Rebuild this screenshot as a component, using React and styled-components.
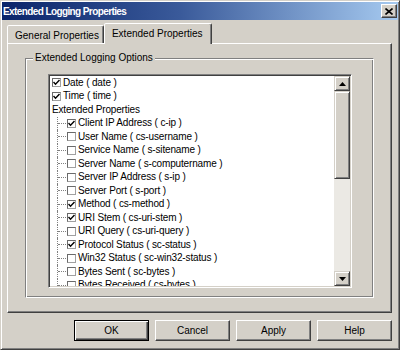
import React from "react";
import styled, { createGlobalStyle } from "styled-components";

const GlobalStyle = createGlobalStyle`
  html, body {
    margin: 0;
    padding: 0;
    background: #d4d0c8;
  }
  body {
    font-family: "Liberation Sans", Arial, sans-serif;
    font-size: 10px;
    color: #000;
  }
`;

const fields = [
  { label: "Date ( date )", checked: true, level: 0 },
  { label: "Time ( time )", checked: true, level: 0 },
  { label: "Extended Properties", header: true },
  { label: "Client IP Address ( c-ip )", checked: true, level: 1 },
  { label: "User Name ( cs-username )", level: 1 },
  { label: "Service Name ( s-sitename )", level: 1 },
  { label: "Server Name ( s-computername )", level: 1 },
  { label: "Server IP Address ( s-ip )", level: 1 },
  { label: "Server Port ( s-port )", level: 1 },
  { label: "Method ( cs-method )", checked: true, level: 1 },
  { label: "URI Stem ( cs-uri-stem )", checked: true, level: 1 },
  { label: "URI Query ( cs-uri-query )", level: 1 },
  { label: "Protocol Status ( sc-status )", checked: true, level: 1 },
  { label: "Win32 Status ( sc-win32-status )", level: 1 },
  { label: "Bytes Sent ( sc-bytes )", level: 1 },
  { label: "Bytes Received ( cs-bytes )", level: 1 },
];

const App = () => {
  return (
    <>
      <GlobalStyle />
      <Window>
        <TitleBar>
          <TitleText>Extended Logging Properties</TitleText>
          <CloseButton>
            <svg width="8" height="7" viewBox="0 0 8 7">
              <path d="M0.5 0.5 L7.5 6.5 M7.5 0.5 L0.5 6.5" stroke="#000" strokeWidth="1.6" />
            </svg>
          </CloseButton>
        </TitleBar>

        <Body>
          <TabRow>
            <Tab>General Properties</Tab>
            <Tab $active>Extended Properties</Tab>
          </TabRow>

          <Panel>
            <GroupBox>
              <Legend>Extended Logging Options</Legend>
              <GroupInner>
                <ListBox>
                  <Items>
                    {fields.map((f) => (
                      <Row key={f.label}>
                        {f.level === 1 && (
                          <Branch>
                            <BranchTick />
                          </Branch>
                        )}
                        {!f.header && (
                          <CheckBox>
                            {f.checked && (
                              <svg width="7" height="7" viewBox="0 0 7 7">
                                <path d="M0.5 3 L2.5 5.2 L6.5 1" stroke="#000" strokeWidth="1.4" fill="none" />
                              </svg>
                            )}
                          </CheckBox>
                        )}
                        <Label>{f.label}</Label>
                      </Row>
                    ))}
                  </Items>
                  <ScrollBar>
                    <ScrollButton>
                      <svg width="7" height="4" viewBox="0 0 7 4">
                        <path d="M3.5 0 L7 4 L0 4 Z" fill="#000" />
                      </svg>
                    </ScrollButton>
                    <Thumb />
                    <Track />
                    <ScrollButton>
                      <svg width="7" height="4" viewBox="0 0 7 4">
                        <path d="M0 0 L7 0 L3.5 4 Z" fill="#000" />
                      </svg>
                    </ScrollButton>
                  </ScrollBar>
                </ListBox>
              </GroupInner>
            </GroupBox>
          </Panel>

          <ButtonRow>
            <DialogButton $default>OK</DialogButton>
            <DialogButton>Cancel</DialogButton>
            <DialogButton>Apply</DialogButton>
            <DialogButton>Help</DialogButton>
          </ButtonRow>
        </Body>
      </Window>
    </>
  );
};

const Window = styled.div`
  width: 400px;
  height: 350px;
  box-sizing: border-box;
  background: #d4d0c8;
  border: 1px solid;
  border-color: #d4d0c8 #404040 #404040 #d4d0c8;
  box-shadow: inset 1px 1px 0 #fff, inset -1px -1px 0 #808080;
  padding: 1px;
  display: flex;
  flex-direction: column;
`;

const TitleBar = styled.div`
  height: 18px;
  flex: none;
  display: flex;
  align-items: center;
  padding: 0 1px 0 1px;
  background: linear-gradient(to right, #0a246a, #3a5a9a 45%, #a6caf0);
`;

const TitleText = styled.div`
  color: #fff;
  font-weight: bold;
  font-size: 10px;
  letter-spacing: -0.6px;
`;

const CloseButton = styled.div`
  margin-left: auto;
  width: 16px;
  height: 14px;
  box-sizing: border-box;
  background: #d4d0c8;
  border: 1px solid;
  border-color: #fff #404040 #404040 #fff;
  box-shadow: inset -1px -1px 0 #808080;
  display: flex;
  align-items: center;
  justify-content: center;
`;

const Body = styled.div`
  flex: 1;
  display: flex;
  flex-direction: column;
  padding: 3px 6px 0 5px;
`;

const TabRow = styled.div`
  height: 20px;
  display: flex;
  align-items: flex-end;
`;

const Tab = styled.div`
  position: relative;
  z-index: ${({ $active }) => ($active ? 1 : 0)};
  box-sizing: border-box;
  height: ${({ $active }) => ($active ? "21px" : "18px")};
  margin-bottom: ${({ $active }) => ($active ? "-1px" : "0")};
  padding: ${({ $active }) => ($active ? "4px 8px 0 7px" : "4px 4px 0 7px")};
  line-height: 12px;
  background: #d4d0c8;
  border: 1px solid;
  border-bottom: none;
  border-color: #fff #404040 transparent #fff;
  border-radius: 2px 2px 0 0;
  box-shadow: inset -1px 0 0 #808080;
  white-space: nowrap;
`;

const Panel = styled.div`
  height: 270px;
  box-sizing: border-box;
  display: flex;
  flex-direction: column;
  border: 1px solid;
  border-color: #fff #404040 #404040 #fff;
  box-shadow: inset -1px -1px 0 #808080;
  padding: 8px 17px 14px 17px;
`;

const GroupBox = styled.fieldset`
  flex: 1;
  margin: 0;
  padding: 0;
  min-width: 0;
  border: 1px solid;
  border-color: #808080 #fff #fff #808080;
  box-shadow: inset 1px 1px 0 #fff, inset -1px -1px 0 #808080;
`;

const Legend = styled.legend`
  margin-left: 7px;
  padding: 0 2px;
  line-height: 12px;
  background: #d4d0c8;
`;

const GroupInner = styled.div`
  padding: 10px 21px 9px 22px;
`;

const ListBox = styled.div`
  height: 214px;
  box-sizing: border-box;
  background: #fff;
  border: 1px solid;
  border-color: #808080 #fff #fff #808080;
  box-shadow: inset 1px 1px 0 #404040, inset -1px -1px 0 #d4d0c8;
  padding: 1px;
  display: flex;
`;

const Items = styled.div`
  flex: 1;
  overflow: hidden;
  padding: 0 0 0 2px;
`;

const Row = styled.div`
  height: 13.5px;
  display: flex;
  align-items: center;
  white-space: nowrap;
`;

const Branch = styled.div`
  align-self: stretch;
  width: 8px;
  margin-left: 5px;
  margin-right: 1px;
  border-left: 1px dotted #808080;
  display: flex;
  align-items: center;
`;

const BranchTick = styled.div`
  width: 100%;
  border-top: 1px dotted #808080;
`;

const CheckBox = styled.div`
  width: 9px;
  height: 9px;
  box-sizing: border-box;
  border: 1px solid;
  border-color: #6a6a6a #a0a0a0 #a0a0a0 #6a6a6a;
  background: #fff;
  display: flex;
  align-items: center;
  justify-content: center;
  margin-right: 2px;
`;

const Label = styled.span`
  line-height: 12px;
  letter-spacing: -0.15px;
`;

const ScrollBar = styled.div`
  width: 16px;
  display: flex;
  flex-direction: column;
`;

const raised = `
  box-sizing: border-box;
  background: #d4d0c8;
  border: 1px solid;
  border-color: #d4d0c8 #404040 #404040 #d4d0c8;
  box-shadow: inset 1px 1px 0 #fff, inset -1px -1px 0 #808080;
`;

const ScrollButton = styled.div`
  ${raised}
  height: 15px;
  display: flex;
  align-items: center;
  justify-content: center;
`;

const Thumb = styled.div`
  ${raised}
  height: 88px;
`;

const Track = styled.div`
  flex: 1;
  background: #ebe9e4;
`;

const ButtonRow = styled.div`
  display: flex;
  justify-content: flex-end;
  gap: 6px;
  margin-top: 7px;
`;

const DialogButton = styled.div`
  width: 75px;
  height: 21px;
  box-sizing: border-box;
  display: flex;
  align-items: center;
  justify-content: center;
  background: #d4d0c8;
  border: 1px solid;
  border-color: ${({ $default }) =>
    $default ? "#000" : "#fff #404040 #404040 #fff"};
  box-shadow: ${({ $default }) =>
    $default
      ? "inset 1px 1px 0 #fff, inset -1px -1px 0 #404040, inset -2px -2px 0 #808080"
      : "inset -1px -1px 0 #808080"};
`;

export default App;
